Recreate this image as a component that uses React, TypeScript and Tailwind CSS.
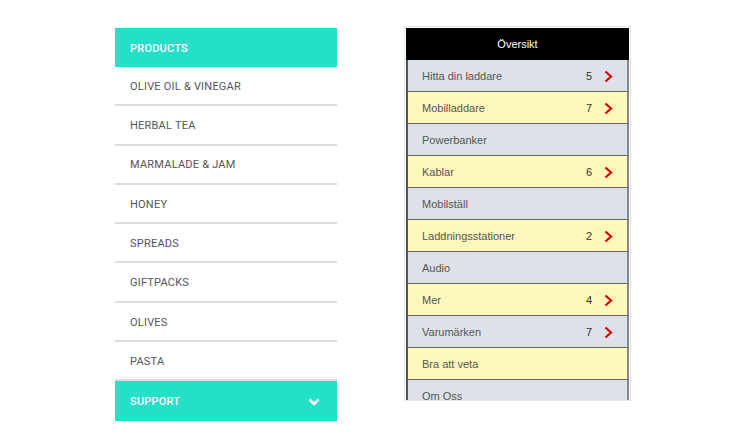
const products = [
  "Olive Oil & Vinegar",
  "Herbal Tea",
  "Marmalade & Jam",
  "Honey",
  "Spreads",
  "Giftpacks",
  "Olives",
  "Pasta",
];

const overview: { label: string; count?: number; yellow: boolean }[] = [
  { label: "Hitta din laddare", count: 5, yellow: false },
  { label: "Mobilladdare", count: 7, yellow: true },
  { label: "Powerbanker", yellow: false },
  { label: "Kablar", count: 6, yellow: true },
  { label: "Mobilställ", yellow: false },
  { label: "Laddningsstationer", count: 2, yellow: true },
  { label: "Audio", yellow: false },
  { label: "Mer", count: 4, yellow: true },
  { label: "Varumärken", count: 7, yellow: false },
  { label: "Bra att veta", yellow: true },
  { label: "Om Oss", yellow: false },
];

function RedChevron() {
  return (
    <svg width="9" height="13" viewBox="0 0 9 13" className="ml-[12px]">
      <path d="M1.5 1.5 L7 6.5 L1.5 11.5" fill="none" stroke="#d40000" strokeWidth="2.2" />
    </svg>
  );
}

function ProductMenu() {
  return (
    <nav className="w-[222px] font-['Roboto',sans-serif] text-[11px] tracking-[0.02em] uppercase">
      <div className="h-[39px] pt-[3px] flex items-center px-[15px] bg-[#24e0c9] text-white font-medium">
        Products
      </div>
      {products.map((p) => (
        <div
          key={p}
          className="h-[39.3px] pt-[3px] flex items-center px-[15px] text-[#555] border-b-2 border-[#dcdcdc] last:border-b-0"
        >
          {p}
        </div>
      ))}
      <div className="h-[40px] pt-[2px] flex items-center justify-between px-[15px] bg-[#24e0c9] text-white font-medium">
        <span>Support</span>
        <svg width="12" height="8" viewBox="0 0 12 8" className="mr-[2px]">
          <path d="M1.5 1.5 L6 6 L10.5 1.5" fill="none" stroke="#fff" strokeWidth="2.6" />
        </svg>
      </div>
    </nav>
  );
}

function OverviewMenu() {
  return (
    <div className="border border-[#e6e6e6] p-px -mt-[2px] -ml-[2px] h-[375px] overflow-hidden">
      <div className="w-[223px] font-['Liberation_Sans',Arial,sans-serif] text-[11px]">
        <div className="h-[32px] pt-px flex items-center justify-center bg-black text-white">Översikt</div>
        {overview.map((item) => (
          <div
            key={item.label}
            className={`h-[32px] pt-px flex items-center pl-[14px] pr-[14px] border-l-2 border-r-2 border-b border-l-[#555] border-r-[#888] border-b-[#666] text-[#555] ${
              item.yellow ? "bg-[#fff8bd]" : "bg-[#dde2ea]"
            }`}
          >
            <span className="flex-1">{item.label}</span>
            {item.count !== undefined && (
              <>
                <span className="text-[#333]">{item.count}</span>
                <RedChevron />
              </>
            )}
          </div>
        ))}
      </div>
    </div>
  );
}

export default function App() {
  return (
    <div className="w-[750px] h-[448px] bg-white flex items-start pt-[28px] pl-[115px] gap-[69px]">
      <ProductMenu />
      <OverviewMenu />
    </div>
  );
}
